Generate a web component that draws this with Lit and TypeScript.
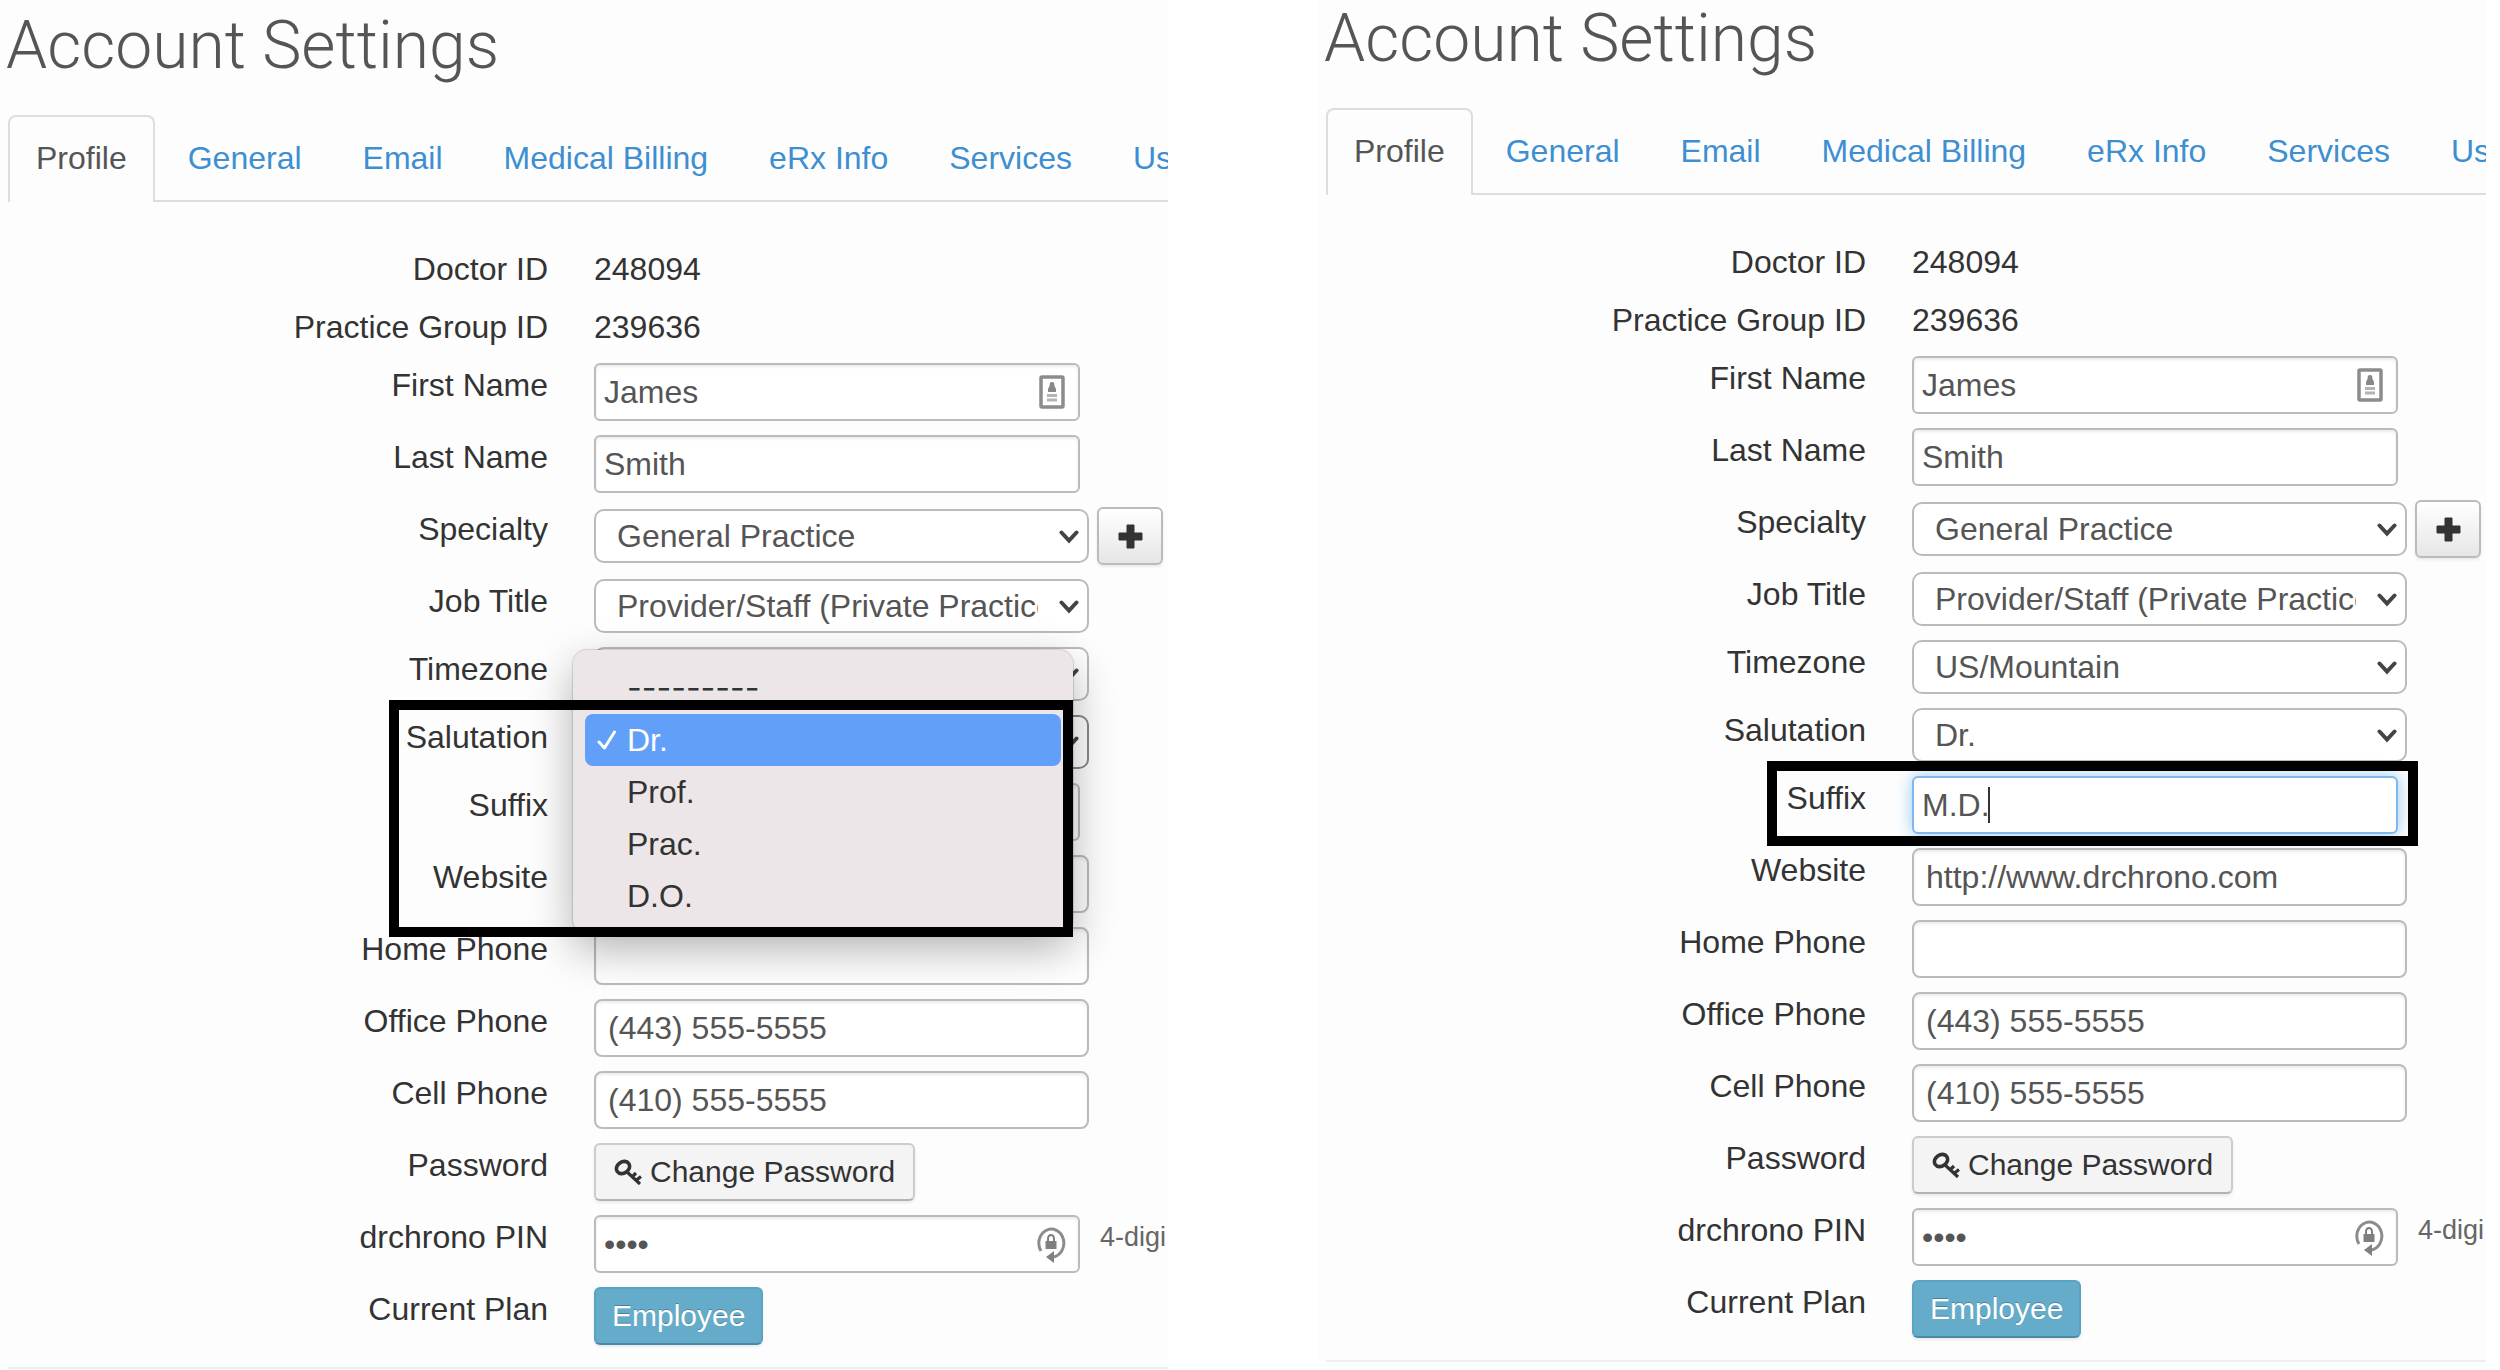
import { LitElement, html, css, nothing } from "lit";
import { customElement, property } from "lit/decorators.js";
import { classMap } from "lit/directives/class-map.js";

type Kind = "static" | "text" | "wide" | "select" | "action" | "pin" | "plan";

interface Field {
  id: string;
  label: string;
  kind: Kind;
  value: string;
  card?: boolean;
  add?: boolean;
}

const FIELDS: Field[] = [
  { id: "doctor", label: "Doctor ID", kind: "static", value: "248094" },
  { id: "group", label: "Practice Group ID", kind: "static", value: "239636" },
  { id: "first", label: "First Name", kind: "text", value: "James", card: true },
  { id: "last", label: "Last Name", kind: "text", value: "Smith" },
  { id: "specialty", label: "Specialty", kind: "select", value: "General Practice", add: true },
  { id: "job", label: "Job Title", kind: "select", value: "Provider/Staff (Private Practice)" },
  { id: "timezone", label: "Timezone", kind: "select", value: "US/Mountain" },
  { id: "salutation", label: "Salutation", kind: "select", value: "Dr." },
  { id: "suffix", label: "Suffix", kind: "text", value: "" },
  { id: "website", label: "Website", kind: "wide", value: "http://www.drchrono.com" },
  { id: "home", label: "Home Phone", kind: "wide", value: "" },
  { id: "office", label: "Office Phone", kind: "wide", value: "(443) 555-5555" },
  { id: "cell", label: "Cell Phone", kind: "wide", value: "(410) 555-5555" },
  { id: "password", label: "Password", kind: "action", value: "Change Password" },
  { id: "pin", label: "drchrono PIN", kind: "pin", value: "1234" },
  { id: "plan", label: "Current Plan", kind: "plan", value: "Employee" },
];

const TABS = ["Profile", "General", "Email", "Medical Billing", "eRx Info", "Services", "Us"];
const SALUTATIONS = ["---------", "Dr.", "Prof.", "Prac.", "D.O."];

const chevron = html`<svg class="chevron" viewBox="0 0 20 14" aria-hidden="true">
  <path d="M2.5 2.5 10 10.5 17.5 2.5" fill="none" stroke="#444" stroke-width="4" stroke-linecap="round" />
</svg>`;

const plusIcon = html`<svg class="plus" viewBox="0 0 25 25" aria-hidden="true">
  <path d="M9 1h7v8h8v7h-8v8H9v-8H1V9h8z" fill="#333" stroke="#333" stroke-linejoin="round" />
</svg>`;

const keyIcon = html`<svg class="key" viewBox="0 0 28 26" aria-hidden="true">
  <ellipse cx="9" cy="8.5" rx="7" ry="5.6" transform="rotate(-35 9 8.5)" fill="none" stroke="#333" stroke-width="3.6" />
  <path d="M12 12 26 25M18 18l4-4M22 21.5l5-4" fill="none" stroke="#333" stroke-width="3.2" />
</svg>`;

const cardIcon = html`<svg class="card" viewBox="0 0 26 34" aria-hidden="true">
  <rect x="2" y="2" width="22" height="30" rx="1" fill="#fff" stroke="#8c8c8c" stroke-width="3.5" />
  <path d="M13 7c2 0 2.600 1.500 2.300 3.500L17 14v3H9v-3l1.700-3.500C10.400 8.500 11 7 13 7z" fill="#888" />
  <path d="M8 20.500h10M8 25h10" stroke="#b4b4b4" stroke-width="3" />
</svg>`;

const pinIcon = html`<svg class="pin-icon" viewBox="0 0 30 38" aria-hidden="true">
  <path d="M5 25A12.5 14 0 1 1 17 31" fill="none" stroke="#8c8c8c" stroke-width="3" />
  <path d="M18 25v12l-8-6z" fill="#808080" />
  <rect x="9.5" y="15" width="11" height="8" fill="#808080" />
  <path d="M12 15v-2.500a3 3.500 0 0 1 6 0V15" fill="none" stroke="#808080" stroke-width="2" />
</svg>`;

@customElement("settings-pane")
export class SettingsPane extends LitElement {
  @property() pane = "salutation";

  static styles = css`
    :host {
      display: block;
      overflow: hidden;
      background: #fdfdfd;
      color: #333;
      font: 32px/44px "Liberation Sans", Arial, sans-serif;
      --edge: 8px;
    }
    * {
      box-sizing: border-box;
    }
    .title {
      margin: 0;
      padding: 0 6px;
      font: 300 66px/92px Roboto, "Liberation Sans", sans-serif;
      color: #555;
    }
    .tabs {
      display: flex;
      gap: 5px;
      margin: 23px 0 45px var(--edge);
      border-bottom: 2px solid #ddd;
      white-space: nowrap;
    }
    .tab {
      padding: 19px 26px 20px;
      border: 2px solid transparent;
      border-bottom: 0;
      border-radius: 8px 8px 0 0;
      color: #3d8fd1;
      text-decoration: none;
    }
    .tab.active {
      margin-bottom: -2px;
      padding-bottom: 22px;
      border-color: #ddd;
      background: #fdfdfd;
      color: #555;
    }
    .form {
      display: grid;
      gap: 14px;
    }
    .row {
      position: relative;
      display: grid;
      grid-template-columns: 548px 1fr;
      column-gap: 46px;
      align-items: start;
    }
    .label {
      text-align: right;
    }
    .controls {
      display: flex;
      align-items: center;
      gap: 8px;
      white-space: nowrap;
    }
    .box {
      position: relative;
      display: flex;
      flex: none;
      width: 486px;
    }
    .box.wide {
      width: 495px;
    }
    .input,
    .select {
      width: 100%;
      margin: 0;
      border: 2px solid #bbb;
      border-radius: 6px;
      background: #fff;
      color: #555;
      font: inherit;
      outline: 0;
    }
    .input {
      height: 58px;
      padding: 0 8px;
      box-shadow: inset 0 2px 3px rgba(0, 0, 0, 0.08);
    }
    .wide .input {
      padding: 0 12px;
      border-radius: 8px;
    }
    .input.focused {
      border-color: #80b8ee;
      box-shadow: 0 0 16px rgba(82, 168, 236, 0.6);
    }
    .select {
      height: 54px;
      padding: 0 49px 0 21px;
      border-radius: 10px;
      appearance: none;
    }
    .select.open {
      border-color: #888;
    }
    .chevron,
    .card,
    .pin-icon,
    .caret {
      position: absolute;
      pointer-events: none;
    }
    .chevron {
      top: 21px;
      right: 10px;
      width: 20px;
      height: 14px;
    }
    .card {
      top: 12px;
      right: 15px;
      width: 26px;
      height: 34px;
    }
    .pin-icon {
      top: 11px;
      right: 14px;
      width: 30px;
      height: 38px;
    }
    .caret {
      top: 11px;
      left: 76px;
      width: 2px;
      height: 36px;
      background: #333;
    }
    .button {
      display: flex;
      align-items: center;
      justify-content: center;
      gap: 8px;
      height: 58px;
      margin: 0;
      padding: 0 18px;
      border: 2px solid #ccc;
      border-bottom-color: #b3b3b3;
      border-radius: 6px;
      background: #f4f4f4;
      box-shadow: 0 2px 3px rgba(0, 0, 0, 0.08);
      color: #333;
      font: inherit;
      font-size: 30px;
    }
    .button.add {
      width: 66px;
      padding: 0;
      border-color: #bbb;
      background: linear-gradient(#fff, #e6e6e6);
    }
    .button.plan {
      padding: 0 16px;
      border-color: #5ba3c2 #5ba3c2 #4a8aa8;
      background: #65acca;
      color: #fff;
      text-shadow: 0 -1px 0 rgba(0, 0, 0, 0.25);
    }
    .plus {
      width: 25px;
      height: 25px;
    }
    .key {
      width: 28px;
      height: 26px;
    }
    .hint {
      align-self: flex-start;
      padding-left: 12px;
      color: #666;
      font-size: 27px;
    }
    .rule {
      height: 2px;
      margin: 22px 0 0 var(--edge);
      border: 0;
      background: #eee;
    }
    .menu {
      position: absolute;
      z-index: 1;
      top: -65px;
      left: 573px;
      width: 500px;
      margin: 0;
      padding: 12px;
      border-radius: 14px;
      background: #ede6e8;
      box-shadow: 0 0 1px 1px rgba(0, 0, 0, 0.14), 0 16px 44px rgba(0, 0, 0, 0.3);
      list-style: none;
    }
    .option {
      display: flex;
      align-items: center;
      height: 52px;
      padding-left: 42px;
      border-radius: 8px;
    }
    .option.blank {
      font-family: Inter, sans-serif;
    }
    .option.chosen {
      gap: 10px;
      padding-left: 12px;
      background: #629ff8;
      color: #fff;
    }
    .tick {
      width: 20px;
      height: 22px;
    }
    .frame {
      position: absolute;
      z-index: 2;
      top: -15px;
      border: 10px solid #000;
      pointer-events: none;
    }
    .frame.salutation {
      left: 389px;
      width: 684px;
      height: 237px;
    }
    .frame.suffix {
      left: 449px;
      width: 651px;
      height: 85px;
    }
  `;

  private menu() {
    return html`<ul class="menu" role="listbox" aria-label="Salutation">
      ${SALUTATIONS.map(
        (name, i) => html`<li
          class=${classMap({ option: true, blank: i === 0, chosen: i === 1 })}
          role="option"
          aria-selected=${i === 1}
        >
          ${i === 1
            ? html`<svg class="tick" viewBox="0 0 20 22" aria-hidden="true">
                <path d="M2 13 7.5 19 17.5 3" fill="none" stroke="#fff" stroke-width="3" stroke-linecap="round" stroke-linejoin="round" />
              </svg>`
            : nothing}<span>${name}</span>
        </li>`
      )}
    </ul>`;
  }

  private control(f: Field) {
    const focused = this.pane === "suffix" && f.id === "suffix";
    switch (f.kind) {
      case "static":
        return html`<output id=${f.id}>${f.value}</output>`;
      case "select":
        return html`<span class="box wide">
            <select id=${f.id} class=${classMap({ select: true, open: this.pane === f.id })}>
              <option>${f.value}</option>
            </select>
            ${chevron}
          </span>
          ${f.add ? html`<button class="button add" type="button" aria-label="Add specialty">${plusIcon}</button>` : nothing}`;
      case "action":
        return html`<button id=${f.id} class="button" type="button">${keyIcon}${f.value}</button>`;
      case "plan":
        return html`<button id=${f.id} class="button plan" type="button">${f.value}</button>`;
      case "pin":
        return html`<span class="box">
            <input id=${f.id} class="input" type="password" .value=${f.value} />
            ${pinIcon}
          </span>
          <span class="hint">4-digi</span>`;
      default:
        return html`<span class=${classMap({ box: true, wide: f.kind === "wide" })}>
          <input
            id=${f.id}
            class=${classMap({ input: true, focused })}
            type="text"
            .value=${focused ? "M.D." : f.value}
          />
          ${f.card ? cardIcon : nothing} ${focused ? html`<span class="caret"></span>` : nothing}
        </span>`;
    }
  }

  render() {
    return html`
      <h1 class="title">Account Settings</h1>
      <nav class="tabs">
        ${TABS.map((t, i) => html`<a class=${classMap({ tab: true, active: i === 0 })} href="#">${t}</a>`)}
      </nav>
      <form class="form">
        ${FIELDS.map(
          (f) => html`<div class="row">
            <label class="label" for=${f.id}>${f.label}</label>
            <div class="controls">${this.control(f)}</div>
            ${f.id === "salutation" && this.pane === "salutation" ? this.menu() : nothing}
            ${f.id === this.pane ? html`<div class="frame ${this.pane}"></div>` : nothing}
          </div>`
        )}
      </form>
      <hr class="rule" />
    `;
  }
}

@customElement("app-root")
export class AppRoot extends LitElement {
  static styles = css`
    :host {
      display: block;
      background: #fff;
    }
    .panes {
      display: grid;
      grid-template-columns: minmax(0, 1fr) minmax(0, 1fr);
      align-items: start;
      gap: 150px;
      padding-right: 14px;
      overflow: hidden;
    }
    .raised {
      margin-top: -7px;
    }
  `;

  render() {
    return html`<main class="panes">
      <settings-pane pane="salutation"></settings-pane>
      <settings-pane class="raised" pane="suffix"></settings-pane>
    </main>`;
  }
}
